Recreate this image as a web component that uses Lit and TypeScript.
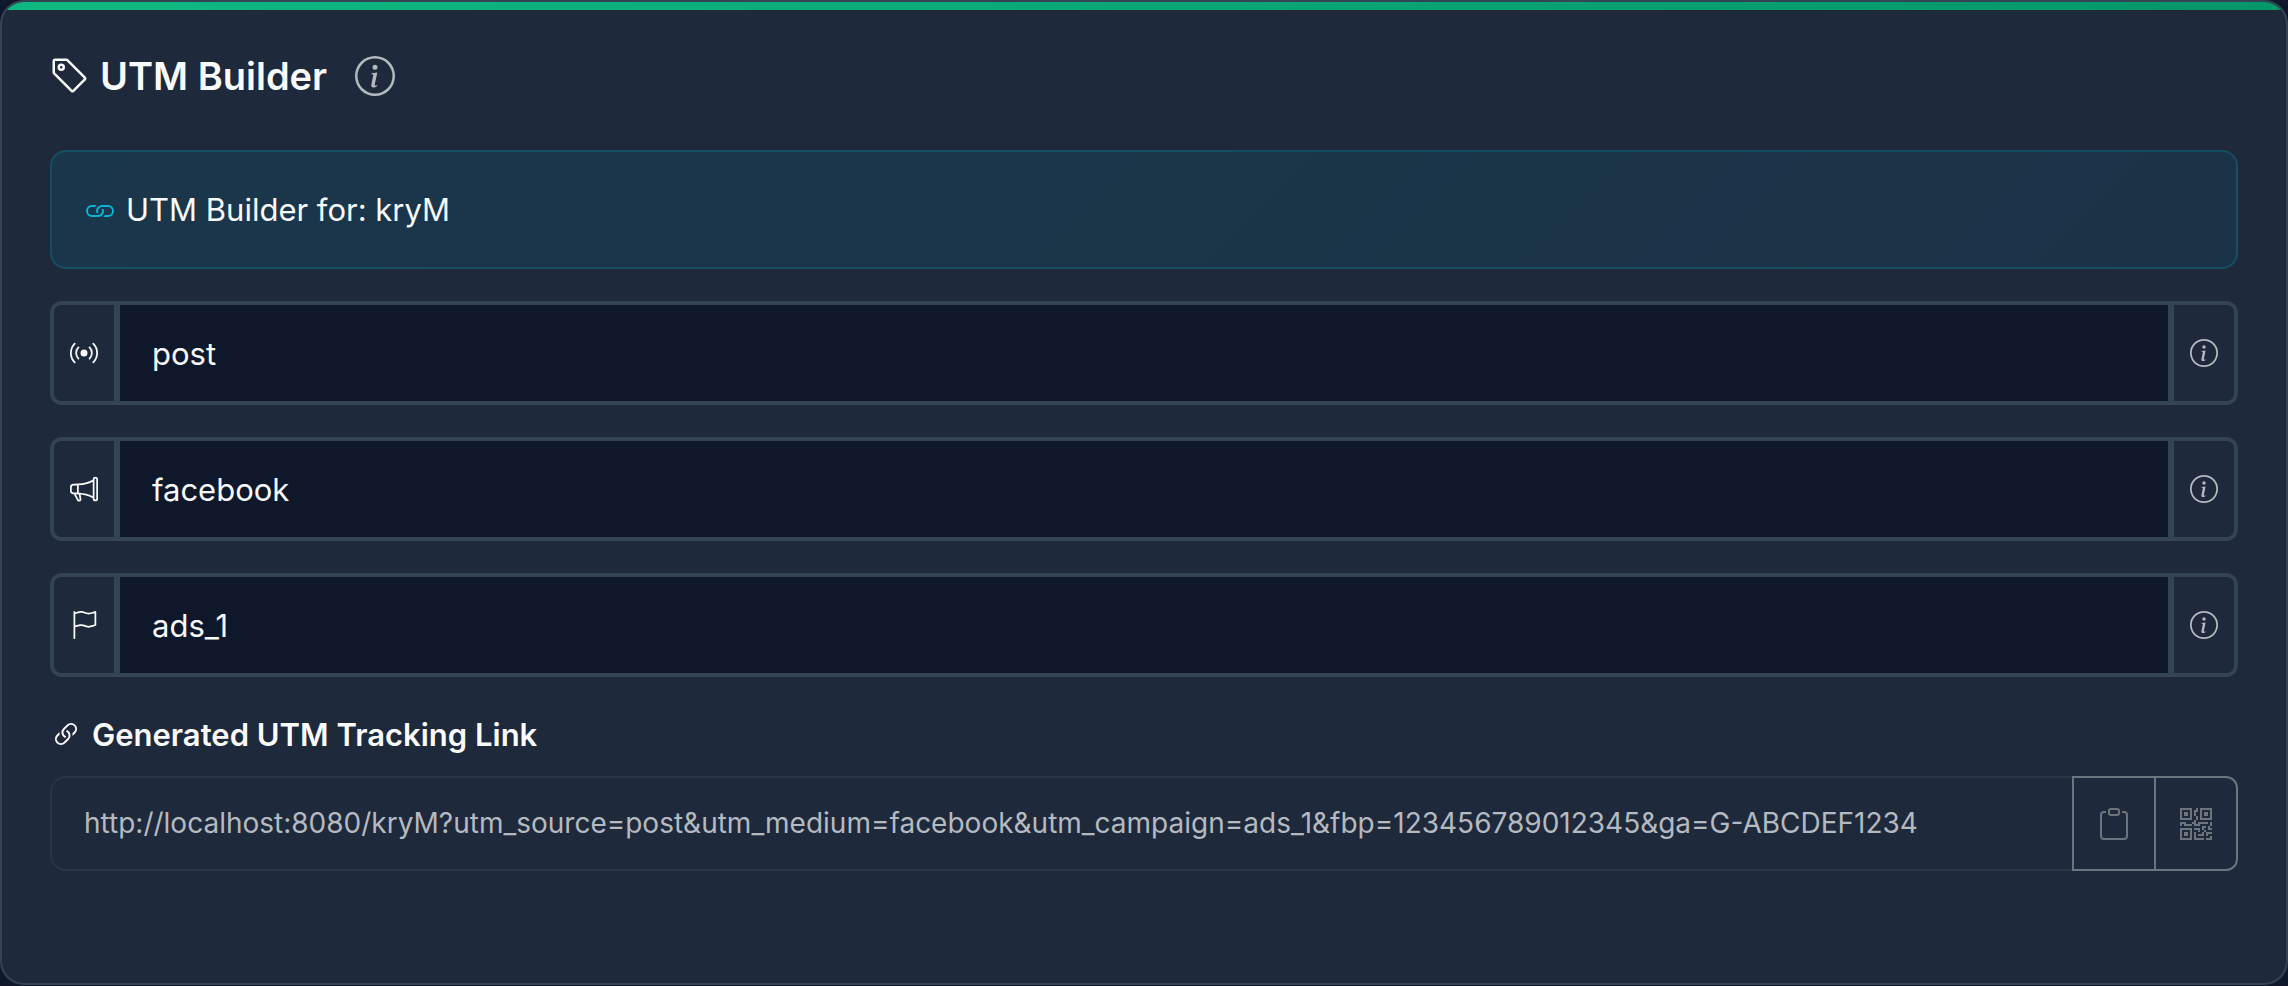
import { LitElement, html, svg, css, TemplateResult, SVGTemplateResult } from "lit";
import { customElement, property, state } from "lit/decorators.js";

const ICONS: Record<string, string[]> = {
  tag: [
    "M6 4.5a1.5 1.5 0 1 1-3 0 1.5 1.5 0 0 1 3 0m-1 0a.5.5 0 1 0-1 0 .5.5 0 0 0 1 0",
    "M2 1h4.586a1 1 0 0 1 .707.293l7 7a1 1 0 0 1 0 1.414l-4.586 4.586a1 1 0 0 1-1.414 0l-7-7A1 1 0 0 1 1 6.586V2a1 1 0 0 1 1-1m0 5.586 7 7L13.586 9l-7-7H2z",
  ],
  info: [
    "M8 15A7 7 0 1 1 8 1a7 7 0 0 1 0 14m0 1A8 8 0 1 0 8 0a8 8 0 0 0 0 16",
    "m8.93 6.588-2.29.287-.082.38.45.083c.294.07.352.176.288.469l-.738 3.468c-.194.897.105 1.319.808 1.319.545 0 1.178-.252 1.465-.598l.088-.416c-.2.176-.492.246-.686.246-.275 0-.375-.193-.304-.533zM9 4.5a1 1 0 1 1-2 0 1 1 0 0 1 2 0",
  ],
  link: [
    "M6.354 5.5H4a3 3 0 0 0 0 6h3a3 3 0 0 0 2.83-4H9q-.13 0-.25.031A2 2 0 0 1 7 10.5H4a2 2 0 1 1 0-4h1.535c.218-.376.495-.714.82-1z",
    "M9 5.5a3 3 0 0 0-2.83 4h1.098A2 2 0 0 1 9 6.5h3a2 2 0 1 1 0 4h-1.535a4 4 0 0 1-.82 1H12a3 3 0 1 0 0-6z",
  ],
  chain: [
    "M4.715 6.542 3.343 7.914a3 3 0 1 0 4.243 4.243l1.828-1.829A3 3 0 0 0 8.586 5.5L8 6.086a1 1 0 0 0-.154.199 2 2 0 0 1 .861 3.337L6.88 11.45a2 2 0 1 1-2.83-2.83l.793-.792a4 4 0 0 1-.128-1.287z",
    "M6.586 4.672A3 3 0 0 0 7.414 9.5l.775-.776a2 2 0 0 1-.896-3.346L9.12 3.55a2 2 0 1 1 2.83 2.83l-.793.792c.112.42.155.855.128 1.287l1.372-1.372a3 3 0 1 0-4.243-4.243z",
  ],
  broadcast: [
    "M3.05 3.05a7 7 0 0 0 0 9.9.5.5 0 0 1-.707.707 8 8 0 0 1 0-11.314.5.5 0 0 1 .707.707m2.122 2.122a4 4 0 0 0 0 5.656.5.5 0 1 1-.708.708 5 5 0 0 1 0-7.072.5.5 0 0 1 .708.708m5.656-.708a.5.5 0 0 1 .708 0 5 5 0 0 1 0 7.072.5.5 0 1 1-.708-.708 4 4 0 0 0 0-5.656.5.5 0 0 1 0-.708m2.122-2.12a.5.5 0 0 1 .707 0 8 8 0 0 1 0 11.313.5.5 0 0 1-.707-.707 7 7 0 0 0 0-9.9.5.5 0 0 1 0-.707zM10 8a2 2 0 1 1-4 0 2 2 0 0 1 4 0",
  ],
  megaphone: [
    "M13 2.5a1.5 1.5 0 0 1 3 0v11a1.5 1.5 0 0 1-3 0v-.214c-2.162-1.241-4.49-1.843-6.912-2.083l.405 2.712A1 1 0 0 1 5.51 15.1h-.548a1 1 0 0 1-.916-.599l-1.85-3.49-.202-.003A2.014 2.014 0 0 1 0 9V7a2.02 2.02 0 0 1 1.992-2.013 75 75 0 0 0 2.483-.075c3.043-.154 6.148-.849 8.525-2.199zm1 0v11a.5.5 0 0 0 1 0v-11a.5.5 0 0 0-1 0m-1 1.35c-2.344 1.205-5.209 1.842-8 2.033v4.233q.27.015.537.036c2.568.189 5.093.744 7.463 1.993zm-9 6.215v-4.13a95 95 0 0 1-1.992.052A1.02 1.02 0 0 0 1 7v2c0 .55.448 1.002 1.006 1.009A61 61 0 0 1 4 10.065m-.657.975 1.609 3.037.01.024h.548l-.002-.014-.443-2.966a68 68 0 0 0-1.722-.082z",
  ],
  flag: [
    "M14.778.085A.5.5 0 0 1 15 .5V8a.5.5 0 0 1-.314.464L14.5 8l.186.464-.003.001-.006.003-.023.009a12 12 0 0 1-.397.15c-.264.095-.631.223-1.047.35-.816.252-1.879.523-2.71.523-.847 0-1.548-.28-2.158-.525l-.028-.01C7.68 8.71 7.14 8.5 6.5 8.5c-.7 0-1.638.23-2.437.477A20 20 0 0 0 3 9.342V15.5a.5.5 0 0 1-1 0V.5a.5.5 0 0 1 1 0v.282c.226-.079.496-.17.79-.26C4.606.272 5.67 0 6.5 0c.84 0 1.524.277 2.121.519l.043.018C9.286.788 9.828 1 10.5 1c.7 0 1.638-.23 2.437-.477a20 20 0 0 0 1.349-.476l.019-.007.004-.002h.001M14 1.221c-.22.078-.48.167-.766.255-.81.252-1.872.523-2.734.523-.886 0-1.592-.286-2.203-.534l-.008-.003C7.662 1.21 7.139 1 6.5 1c-.669 0-1.606.229-2.415.478A21 21 0 0 0 3 1.845v6.433c.22-.078.48-.167.766-.255C4.576 7.77 5.638 7.5 6.5 7.5c.847 0 1.548.28 2.158.525l.028.01C9.32 8.29 9.86 8.5 10.5 8.5c.668 0 1.606-.229 2.415-.478A21 21 0 0 0 14 7.655V1.222z",
  ],
  clipboard: [
    "M4 1.5H3a2 2 0 0 0-2 2V14a2 2 0 0 0 2 2h10a2 2 0 0 0 2-2V3.5a2 2 0 0 0-2-2h-1v1h1a1 1 0 0 1 1 1V14a1 1 0 0 1-1 1H3a1 1 0 0 1-1-1V3.5a1 1 0 0 1 1-1h1z",
    "M9.5 1a.5.5 0 0 1 .5.5v1a.5.5 0 0 1-.5.5h-3a.5.5 0 0 1-.5-.5v-1a.5.5 0 0 1 .5-.5zm-3-1A1.5 1.5 0 0 0 5 1.5v1A1.5 1.5 0 0 0 6.5 4h3A1.5 1.5 0 0 0 11 2.5v-1A1.5 1.5 0 0 0 9.5 0z",
  ],
  qr: [
    "M2 2h2v2H2z",
    "M6 0v6H0V0zM5 1H1v4h4zM4 12H2v2h2z",
    "M6 10v6H0v-6zm-5 1v4h4v-4zm11-9h2v2h-2z",
    "M10 0v6h6V0zm5 1v4h-4V1zM8 1V0h1v2H8v2H7V1zm0 5V4h1v2zM6 8V7h1V6h1v2h1V7h5v1h-4v1H7V8zm0 0v1H2V8H1v1H0V7h3v1zm10 1h-1V7h1zm-1 0h-1v2h2v-1h-1zm-4 0h2v1h-1v1h-1zm2 3v-1h-1v1h-1v1H9v1h3v-2zm0 0h3v1h-2v1h-1zm-4-1v1h1v-2H7v1z",
    "M7 12h1v3h4v1H7zm9 2v2h-3v-1h2v-1z",
  ],
};

const icon = (name: string, size = ""): TemplateResult => html`
  <svg class="icon ${size}" viewBox="0 0 16 16" fill="currentColor" aria-hidden="true">
    ${ICONS[name].map((d): SVGTemplateResult => svg`<path d=${d}></path>`)}
  </svg>
`;

const iconStyles = css`
  .icon {
    display: block;
    flex: none;
    width: 32px;
    height: 32px;
  }
  .icon.small {
    width: 28px;
    height: 28px;
  }
  .icon.large {
    width: 40px;
    height: 40px;
  }
`;

/* Text field framed by a leading icon and a trailing help button. */
@customElement("utm-field")
export class UtmField extends LitElement {
  @property() icon = "tag";
  @property() label = "";
  @property() value = "";

  static styles = [
    iconStyles,
    css`
      :host {
        display: block;
      }
      .group {
        display: flex;
        height: 104px;
        box-sizing: border-box;
        border: 4px solid #334454;
        border-radius: 12px;
        overflow: hidden;
      }
      .addon {
        flex: none;
        display: flex;
        align-items: center;
        justify-content: center;
        width: 60px;
        padding: 0;
        margin: 0;
        border: 0;
        background: #1e293b;
        color: #f8fafc;
      }
      .help {
        color: #b5b9c0;
        cursor: pointer;
      }
      .input {
        flex: 1;
        min-width: 0;
        box-sizing: border-box;
        margin: 0;
        padding: 0 32px;
        border: 0 solid #334454;
        border-width: 0 6px;
        border-radius: 0;
        outline: none;
        background: #0f172a;
        color: #f8fafc;
        font: inherit;
      }
    `,
  ];

  private onInput(e: Event) {
    this.value = (e.target as HTMLInputElement).value;
    this.dispatchEvent(new CustomEvent("field-change", { detail: this.value }));
  }

  render() {
    return html`
      <div class="group">
        <label class="addon" for="field" aria-label=${this.label}>${icon(this.icon, "small")}</label>
        <input class="input" id="field" type="text" .value=${this.value} @input=${this.onInput} />
        <button class="addon help" type="button" aria-label="About ${this.label}">
          ${icon("info", "small")}
        </button>
      </div>
    `;
  }
}

@customElement("app-root")
export class AppRoot extends LitElement {
  @state() private source = "post";
  @state() private medium = "facebook";
  @state() private campaign = "ads_1";

  private readonly code = "kryM";

  static styles = [
    iconStyles,
    css`
      :host {
        display: flex;
        flex-direction: column;
        box-sizing: border-box;
        min-height: 100vh;
        padding-bottom: 1px;
        background: #0f172a;
        color: #f8fafc;
        font-family: Inter, "Liberation Sans", sans-serif;
        font-size: 31px;
        line-height: 51px;
      }
      .card {
        flex: 1;
        position: relative;
        box-sizing: border-box;
        padding: 48px;
        border: 2px solid #334454;
        border-radius: 24px;
        overflow: hidden;
        background: #1e293b;
      }
      .card::before {
        content: "";
        position: absolute;
        inset: 0 0 auto;
        height: 8px;
        background: linear-gradient(90deg, #10b981, #059669);
      }
      .header {
        display: flex;
        align-items: center;
        margin-bottom: 48px;
      }
      .title {
        display: flex;
        align-items: center;
        gap: 10px;
        margin: 0;
        font-size: 38px;
        line-height: 52px;
        font-weight: 600;
      }
      .help {
        display: block;
        margin: 0 0 0 28px;
        padding: 0;
        border: 0;
        background: none;
        color: #b5b9c0;
        cursor: pointer;
      }
      .banner {
        display: flex;
        align-items: center;
        gap: 10px;
        padding: 32px;
        margin-bottom: 32px;
        border: 2px solid rgba(6, 182, 212, 0.2);
        border-radius: 16px;
        background: linear-gradient(135deg, rgba(6, 182, 212, 0.1), rgba(8, 145, 178, 0.1));
      }
      .banner .icon {
        color: #06b6d4;
      }
      .fields {
        display: grid;
        gap: 32px;
        margin-bottom: 32px;
      }
      .label {
        display: flex;
        align-items: center;
        gap: 10px;
        margin-bottom: 16px;
        font-weight: 600;
      }
      .output {
        display: flex;
        height: 95px;
      }
      .url {
        flex: 1;
        min-width: 0;
        box-sizing: border-box;
        margin: 0;
        padding: 0 32px;
        border: 2px solid #293647;
        border-right: 0;
        border-radius: 16px 0 0 16px;
        outline: none;
        background: #1e293b;
        color: #b5b9c0;
        font: inherit;
        font-size: 28px;
      }
      .action {
        flex: none;
        display: flex;
        align-items: center;
        justify-content: center;
        box-sizing: border-box;
        width: 84px;
        margin: 0;
        padding: 0;
        border: 2px solid #6c757d;
        border-radius: 0;
        background: none;
        color: #6c757d;
        cursor: pointer;
      }
      .action + .action {
        margin-left: -2px;
        border-radius: 0 12px 12px 0;
      }
    `,
  ];

  private get trackingUrl() {
    return (
      `http://localhost:8080/${this.code}?utm_source=${this.source}&utm_medium=${this.medium}` +
      `&utm_campaign=${this.campaign}&fbp=123456789012345&ga=G-ABCDEF1234`
    );
  }

  render() {
    return html`
      <main class="card">
        <header class="header">
          <h1 class="title">${icon("tag", "large")}<span>UTM Builder</span></h1>
          <button class="help" type="button" aria-label="About the UTM Builder">
            ${icon("info", "large")}
          </button>
        </header>

        <div class="banner">${icon("link")}<span>UTM Builder for: ${this.code}</span></div>

        <div class="fields">
          <utm-field
            icon="broadcast"
            label="UTM source"
            .value=${this.source}
            @field-change=${(e: CustomEvent) => (this.source = e.detail)}
          ></utm-field>
          <utm-field
            icon="megaphone"
            label="UTM medium"
            .value=${this.medium}
            @field-change=${(e: CustomEvent) => (this.medium = e.detail)}
          ></utm-field>
          <utm-field
            icon="flag"
            label="UTM campaign"
            .value=${this.campaign}
            @field-change=${(e: CustomEvent) => (this.campaign = e.detail)}
          ></utm-field>
        </div>

        <label class="label" for="url">${icon("chain")}<span>Generated UTM Tracking Link</span></label>
        <div class="output">
          <input class="url" id="url" type="text" readonly .value=${this.trackingUrl} />
          <button
            class="action"
            type="button"
            aria-label="Copy link"
            @click=${() => navigator.clipboard?.writeText(this.trackingUrl)}
          >
            ${icon("clipboard")}
          </button>
          <button class="action" type="button" aria-label="Show QR code">${icon("qr")}</button>
        </div>
      </main>
    `;
  }
}
